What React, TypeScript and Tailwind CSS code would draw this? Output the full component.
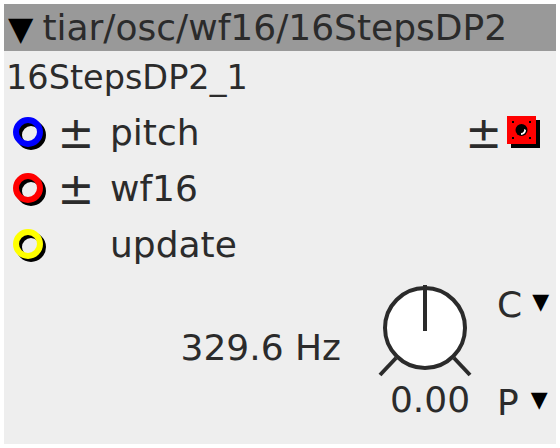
import React from "react";

const font = { fontFamily: '"DejaVu Sans", "Noto Sans", sans-serif' };

function Inlet({ color }: { color: string }) {
  return (
    <svg width="36" height="36" viewBox="0 0 36 36" className="shrink-0">
      <circle cx="19" cy="19" r="12" fill="none" stroke="#000" strokeWidth="6" />
      <circle cx="16" cy="16" r="12" fill="none" stroke={color} strokeWidth="6" />
    </svg>
  );
}

function Outlet() {
  return (
    <svg width="36" height="36" viewBox="0 0 36 36" className="shrink-0">
      <rect x="5" y="5" width="29" height="28" fill="#000" />
      <rect x="1" y="1" width="29" height="28" fill="#ff0000" />
      <rect x="6" y="6" width="2" height="2" fill="#000" />
      <rect x="23" y="6" width="2" height="2" fill="#000" />
      <rect x="6" y="22" width="2" height="2" fill="#000" />
      <rect x="23" y="22" width="2" height="2" fill="#000" />
      <circle cx="15.5" cy="15" r="6" fill="#000" />
      <path d="M15 20 A5 5 0 0 0 20 15 L18 14 A3 3 0 0 1 15 18 Z" fill="#fff" />
    </svg>
  );
}

function Knob() {
  return (
    <svg width="96" height="94" viewBox="0 0 96 94">
      <circle cx="47" cy="45" r="40" fill="#fff" stroke="#2b2b2b" strokeWidth="4" />
      <line x1="47" y1="2" x2="47" y2="48" stroke="#2b2b2b" strokeWidth="4" />
      <line x1="2" y1="92" x2="18" y2="75" stroke="#2b2b2b" strokeWidth="4" />
      <line x1="76" y1="75" x2="92" y2="92" stroke="#2b2b2b" strokeWidth="4" />
    </svg>
  );
}

const rows = [
  { name: "pitch", color: "#0000ff", pm: true, out: true },
  { name: "wf16", color: "#ff0000", pm: true, out: false },
  { name: "update", color: "#ffff00", pm: false, out: false },
];

export default function App() {
  return (
    <div className="w-[560px] h-[448px] bg-white p-[4px] text-[#2b2b2b]" style={font}>
      <div className="w-[552px] h-[440px] bg-[#eeeeee] flex flex-col">
        <div className="h-[47px] bg-[#999999] flex items-center shrink-0">
          <span className="ml-[4px] mt-[2px] text-[33px] leading-none text-black">▼</span>
          <span className="ml-[9px] text-[36px] leading-none">tiar/osc/wf16/16StepsDP2</span>
        </div>
        <div className="h-[54px] flex items-center pl-[2px] text-[33.5px] leading-none shrink-0">
          16StepsDP2_1
        </div>
        {rows.map((r) => (
          <div key={r.name} className="h-[56px] flex items-center shrink-0 text-[36px] leading-none">
            <div className="ml-[8px] mt-[2px]">
              <Inlet color={r.color} />
            </div>
            <span className="ml-[8px] w-[40px] text-center text-[44px]">{r.pm ? "±" : ""}</span>
            <span className="ml-[14px]">{r.name}</span>
            {r.out && (
              <div className="ml-auto mr-[14px] flex items-center">
                <span className="mr-[4px] text-[44px]">±</span>
                <Outlet />
              </div>
            )}
          </div>
        ))}
        <div className="flex flex-1">
          <div className="w-[374px] flex justify-end items-start pr-[37px] pt-[57px] text-[36px] leading-none">
            329.6 Hz
          </div>
          <div className="flex flex-col items-center w-[96px] pt-[10px]">
            <Knob />
            <span className="text-[36px] leading-none mt-[5px] ml-[8px]">0.00</span>
          </div>
          <div className="flex flex-col pl-[23px] pt-[14px] text-[36px] leading-none">
            <div className="flex items-center">
              <span>C</span>
              <span className="ml-[10px] mb-[6px] text-[22px] text-black">▼</span>
            </div>
            <div className="flex items-center mt-[62px]">
              <span>P</span>
              <span className="ml-[12px] mb-[6px] text-[22px] text-black">▼</span>
            </div>
          </div>
        </div>
      </div>
    </div>
  );
}
